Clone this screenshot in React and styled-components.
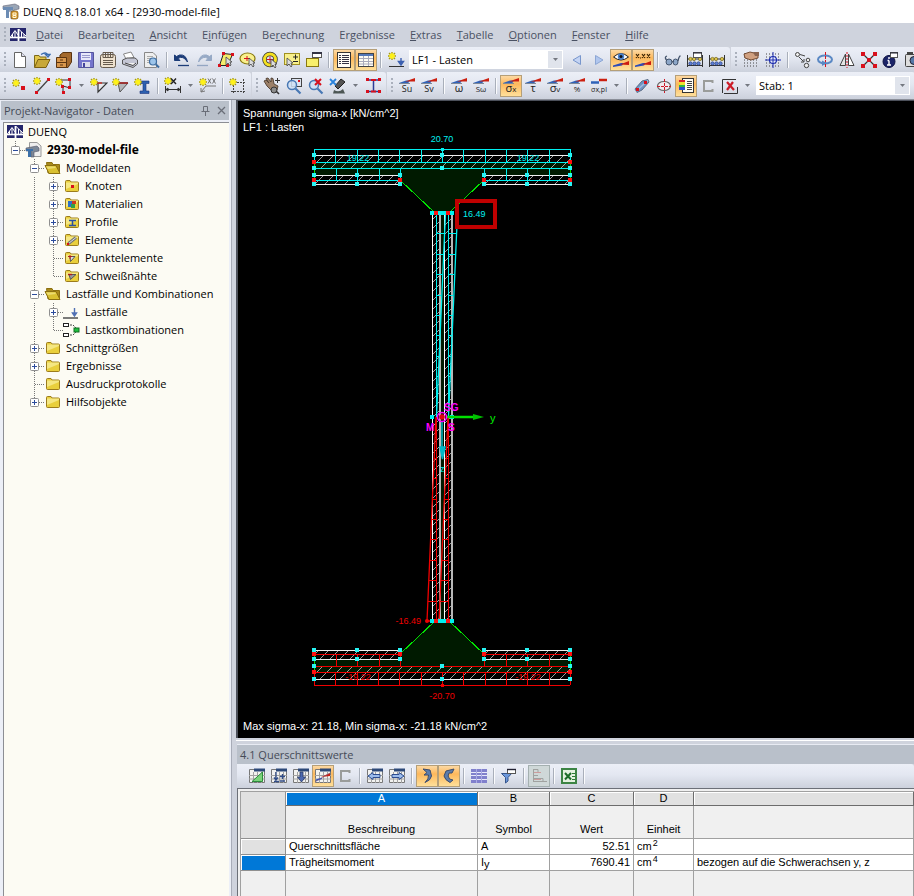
import React from "react";
import styled, { createGlobalStyle, css } from "styled-components";

const UI_FONT = '"Open Sans", "Noto Sans", sans-serif';
const GDI_FONT = '"Liberation Sans", Arial, sans-serif';

const GlobalStyle = createGlobalStyle`
  * { box-sizing: border-box; }
  body { margin: 0; overflow: hidden; background: #cfd3dd; }
  button, select { font: inherit; color: inherit; margin: 0; }
`;

/* ---------- icon fragments ---------- */

const Star = ({ x = 4, y = 5 }) => (
  <g transform={`translate(${x} ${y})`}>
    <path d="M0-4V4M-4 0H4M-3-3L3 3M3-3L-3 3" stroke="#a89a10" strokeWidth="1.4" />
    <path d="M0-3V3M-3 0H3M-2-2L2 2M2-2L-2 2" stroke="#fff21a" strokeWidth="1.4" />
  </g>
);
const Flag = () => (
  <g>
    <path d="M1 7V6L8 3.500H12L10 6.500Z" fill="#2f62b8" />
    <path d="M7 4.500L17 1V4.500Z" fill="#cc2010" />
    <path d="M1 6.500H12" stroke="#7c8898" />
  </g>
);
const Sym = ({ children, x = 9, size = 9 }) => (
  <text x={x} y="15" fontSize={size} textAnchor="middle" fontFamily='"Open Sans", sans-serif' fill="#1c1c1c">
    {children}
  </text>
);
const Dot = ({ x, y, s = 3, c = "#d8101c" }) => <rect x={x} y={y} width={s} height={s} fill={c} />;
const MiniGrid = ({ children }) => (
  <g>
    <path d="M1.500 2.500H16.500V15.500H1.500Z" fill="#f2f2f0" stroke="#777" />
    <path d="M6 1.500H17V4.500H6Z" fill="#2c4878" />
    <path d="M1 8.500H17M1 12H17M5.500 5V16M9.500 5V16M13.500 5V16" stroke="#a2a2a2" />
    {children}
  </g>
);
const Cursor = ({ x = 9, y = 8 }) => (
  <path d={`M${x} ${y}V${y + 8}L${x + 2} ${y + 6}L${x + 4} ${y + 9}L${x + 5} ${y + 8}L${x + 4} ${y + 5}H${x + 6}Z`} fill="#ddd" stroke="#444" strokeWidth="0.8" />
);
const Abacus = () => (
  <g>
    <path d="M1.500 4V16M16.500 4V16M1 8H17M1 14.500H17" stroke="#333" fill="none" />
    <g fill="#d9c34c" stroke="#6b5a10" strokeWidth="0.6"><circle cx="4.500" cy="8" r="1.700" /><circle cx="8" cy="8" r="1.700" /><circle cx="14" cy="8" r="1.700" /></g>
    <g fill="#5f82d8" stroke="#1c2f70" strokeWidth="0.6"><circle cx="4.500" cy="12.500" r="1.700" /><circle cx="8.500" cy="12.500" r="1.700" /><circle cx="12.500" cy="12.500" r="1.700" /></g>
  </g>
);
const FolderBody = () => (
  <g>
    <path d="M2.500 4.500Q2.500 3.500 3.500 3.500H7L8 5H14.500Q15.500 5 15.500 6V13.500Q15.500 14.500 14.500 14.500H3.500Q2.500 14.500 2.500 13.500Z" fill="#e9cf3c" stroke="#9c7c1c" />
    <path d="M3 5.500H15V7L3 12Z" fill="#f8ec94" opacity="0.8" />
  </g>
);
const Dots = () => (
  <path d="M2 3H17M2 6H17M2 9H17M2 12H17M2 15H17" stroke="#444" strokeDasharray="1 2" />
);
const Dim = ({ c = "#333" }) => <path d="M1.500 9V16M16.500 9V16M1 12.500H17M2 12.500L4 11V14ZM16 12.500L14 11V14Z" stroke={c} fill={c} />;

const ICONS = {
  bridge: <g><rect x="1" y="2" width="16" height="13" fill="#25266c" /><path d="M1 11.500H17" stroke="#fff" strokeWidth="1.600" /><path d="M9.500 3V15" stroke="#fff" strokeWidth="1.800" /><path d="M1.500 11L6 4.500L9 9M3.500 8V11M6 5V11M10 3.500L17 10M12.500 6V11M15 8V11" stroke="#fff" fill="none" /></g>,
  app: <g><path d="M1 3L13 1L17 3V6L12 7V15L9 16V8L6 8.500V6L1 6Z" fill="#9aa6b6" stroke="#667" strokeWidth="0.600" /><path d="M1 4H11V7H7V15H4V7H1Z" fill="#6c8cb4" /><rect x="9" y="8" width="7" height="8" rx="2" fill="#d9992c" stroke="#805810" strokeWidth="0.700" /><path d="M11 10H14V12H11ZM11 12.500H14V14.500H11Z" fill="none" stroke="#fff8d8" /></g>,
  new: <g><path d="M3.500 1.500H10.500L14.500 5.500V16.500H3.500Z" fill="#fff" stroke="#666" /><path d="M10.500 1.500V5.500H14.500" fill="#dde" stroke="#666" /></g>,
  open: <g><path d="M1.500 16V4.500H6L7 6H13V9" fill="#e2c64c" stroke="#7c6a1c" /><path d="M1.500 16.500L5 8.500H17L13 16.500Z" fill="#c8a838" stroke="#7c6010" /><path d="M8 3.500Q13 0 15 4M15 6L12.500 3.500H17Z" fill="none" stroke="#3a6cb0" strokeWidth="1.300" /></g>,
  cabinet: <g><path d="M5 4L8 1.500H16.500V11L13 16.500H5Z" fill="#a4692c" stroke="#5a3410" /><path d="M1.500 6.500H11.500V16.500H1.500Z" fill="#d9974c" stroke="#5a3410" /><path d="M1.500 11.500H11.500M5 9H8M5 14H8" stroke="#5a3410" /></g>,
  save: <g><path d="M1.500 1.500H16.500V16.500H1.500Z" fill="#7474cc" stroke="#55559c" /><rect x="4" y="2" width="10" height="7" fill="#e8e8fa" /><path d="M5 4.500H13M5 6.500H13" stroke="#9999cc" /><rect x="5" y="11" width="8" height="5" fill="#dcdcec" /><rect x="6" y="12" width="2" height="4" fill="#44449c" /></g>,
  sheet: <g><rect x="1.500" y="3.500" width="15" height="13" rx="2" fill="#efe2cf" stroke="#665a4c" /><path d="M4 1.500H14V6.500H4ZM6.500 2V6M9 2V6M11.500 2V6M4 9.500H14M4 11.500H14M4 13.500H14" stroke="#665a4c" fill="none" /></g>,
  print: <g><path d="M5 8L2.500 3L10 1L13 6.500Z" fill="#fff" stroke="#888" /><path d="M1.500 9L6 7H14L16.500 9V13L12 16.500L1.500 13Z" fill="#c4c6d4" stroke="#555" /><path d="M4 12L12 14.500L15 12" stroke="#444" fill="#f4f4f4" /></g>,
  preview: <g><path d="M1.500 1.500H10L13.500 5V16.500H1.500Z" fill="#eee" stroke="#888" /><path d="M4 5.500H10M4 7.500H8M4 9.500H7M4 11.500H7" stroke="#aaa" /><circle cx="10" cy="10.500" r="3.500" fill="#9cc4ea" stroke="#3c6ca0" strokeWidth="1.200" /><path d="M13 13.500L16 16.500" stroke="#3c6ca0" strokeWidth="2" /></g>,
  undo: <g><path d="M1.500 4V9.500H7L5 7.500Q10 4 14.500 11Q13 3 6.500 4L3.500 5.500Z" fill="#1c3c78" stroke="#1c3c78" /><path d="M5 14.500H16" stroke="#1c3c78" strokeWidth="1.300" /></g>,
  redo: <g opacity="0.7"><path d="M16.500 4V9.500H11L13 7.500Q8 4 3.500 11Q5 3 11.500 4L14.500 5.500Z" fill="#7790b4" stroke="#7790b4" /><path d="M2 14.500H13" stroke="#7790b4" strokeWidth="1.300" /></g>,
  selPoly: <g><path d="M6.500 2.500L15.500 3.500L10.500 14.500H2.500Z" fill="#f4ec6c" stroke="#222" /><Dot x={5} y={1} /><Dot x={14} y={2} /><Dot x={1} y={13} /><Dot x={9} y={13} /><Cursor x={9} y={6} /></g>,
  selEll: <g><ellipse cx="8.500" cy="7.500" rx="7.500" ry="5.500" fill="#f8f08c" stroke="#887810" strokeWidth="1.200" /><path d="M5 7.500H11M8 5V10" stroke="#d8101c" /><Cursor x={10} y={7} /></g>,
  selRing: <g><circle cx="9" cy="8.500" r="5.500" fill="none" stroke="#333" strokeWidth="4.500" /><circle cx="9" cy="8.500" r="5.500" fill="none" stroke="#f4e020" strokeWidth="3" /><path d="M6 8.500H12M9 5.500V11.500" stroke="#d8101c" /><Cursor x={10} y={8} /></g>,
  selPlus: <g><rect x="1.500" y="2.500" width="15" height="11" fill="#f8f08c" stroke="#a09020" /><path d="M12.500 3.500V8.500M10 6H15M10 10.500H15" stroke="#222" /><Cursor x={4} y={7} /></g>,
  newWin: <g><rect x="1.500" y="7.500" width="12" height="8" fill="#f8f06c" stroke="#887810" /><rect x="7.500" y="1.500" width="9" height="5" fill="#fff" stroke="#555" /><path d="M7 2H17" stroke="#334" strokeWidth="2" /></g>,
  listDoc: <g><rect x="2.500" y="1.500" width="13" height="15" fill="#fffdf4" stroke="#333" /><path d="M4 4.500H6M4 6.500H6M4 8.500H6M4 10.500H6M4 12.500H6M7 4.500H14M7 6.500H14M7 8.500H14M7 10.500H14M7 12.500H14" stroke="#334" /></g>,
  tableDoc: <g><rect x="1.500" y="2.500" width="15" height="13" fill="#fffdf4" stroke="#444" /><rect x="2" y="3" width="14" height="2" fill="#5578b8" /><path d="M2 7.500H16M2 10.500H16M2 13H16M6.500 5V15M11.500 5V15" stroke="#aab" /></g>,
  newLoad: <g><Star x={5} y={5} /><path d="M2 15.500H17" stroke="#333" /><path d="M14 7V12M11.500 10.500L14 14L16.500 10.500Z" stroke="#3c60b0" fill="#3c60b0" strokeWidth="1.400" /></g>,
  prev: <path d="M12.500 4.500V13.500L5 9Z" fill="#c4d4f4" stroke="#7896cc" />,
  next: <path d="M5.500 4.500V13.500L13 9Z" fill="#b0c6ee" stroke="#8ca6d4" />,
  eye: <g><path d="M1.500 6Q9-1 16.500 6Q9 12 1.500 6Z" fill="#fff" stroke="#222" /><circle cx="9" cy="5.500" r="3.200" fill="#4a80cc" /><circle cx="9" cy="5.500" r="1.500" fill="#111" /><path d="M1 16V14.500L9 12H12L10 14.500Z" fill="#2c4cb8" /><path d="M8 13.500L17 10V14Z" fill="#cc1c10" /></g>,
  xxx: <g><path d="M2 3L5 7M5 3L2 7M8 3L11 7M11 3L8 7M13 3L16 7M16 3L13 7M6 7H7" stroke="#3a2404" strokeWidth="1.200" /><path d="M1 16V14.500L9 12H12L10 14.500Z" fill="#2c4cb8" /><path d="M8 13.500L17 10V14Z" fill="#cc1c10" /></g>,
  glasses: <g fill="#8ca6c8" stroke="#44546c"><ellipse cx="5" cy="11" rx="3" ry="3" /><ellipse cx="11.500" cy="11" rx="2.500" ry="3" /><path d="M2.500 9Q0 6 3 5M8 11L10 10M14 10Q15 5 16.500 5" fill="none" strokeWidth="1.300" /></g>,
  abacusWin: <g><Abacus /><rect x="7.500" y="1.500" width="8" height="5" fill="#fff" stroke="#555" /><path d="M7 2H16" stroke="#223" /></g>,
  abacus: <Abacus />,
  handGrid: <g><Dots /><path d="M2 3L8 1L16 3V7L9 9L3 7Z" fill="#d0a080" stroke="#744c34" /><path d="M11 1H17V5H13Z" fill="#8a6450" /></g>,
  snapGrid: <g><Dots /><circle cx="9" cy="9" r="3.500" fill="#e8ecfa" stroke="#1c2cb0" strokeWidth="1.200" /><path d="M9 1V17M1 9H17" stroke="#1c2cb0" /></g>,
  copyNode: <g fill="#eee" stroke="#444"><circle cx="3.500" cy="3.500" r="2" /><circle cx="14" cy="9" r="1.800" /><circle cx="12.500" cy="14.500" r="2.200" /><path d="M6 3.500L11 5M5 6L9.500 10.500M10 8V11H7" fill="none" /></g>,
  rotate: <g><ellipse cx="9" cy="8.500" rx="7" ry="4" fill="none" stroke="#5a88c4" strokeWidth="2" /><path d="M9.500 1V17" stroke="#d8101c" strokeDasharray="3 1" /><path d="M6 9.500L11 12L6 15Z" fill="#5a88c4" /></g>,
  mirror: <g><path d="M7.500 3V14.500H2Z" fill="#e4e4e4" stroke="#444" /><path d="M10.500 3V14.500H16Z" fill="#fff" stroke="#444" /><path d="M9 1V17" stroke="#d8101c" strokeDasharray="2 1" /></g>,
  cross: <g><path d="M3 3L15 15M15 3L3 15" stroke="#333" strokeWidth="1.200" /><Dot x={1} y={1} s={4} /><Dot x={13} y={1} s={4} /><Dot x={1} y={13} s={4} /><Dot x={13} y={13} s={4} /><Dot x={7} y={7} s={4} /></g>,
  info: <g><circle cx="7" cy="10.500" r="6" fill="#1c2468" stroke="#0c1040" /><path d="M7 6V8M7 9.500V14M5 14H9M5.500 9.500H7" stroke="#fff" strokeWidth="1.400" /><rect x="8.500" y="1.500" width="7" height="5" fill="#fff" stroke="#555" /><path d="M8 2H16" stroke="#223" /></g>,
  camera: <g><rect x="1.500" y="3.500" width="15" height="12" rx="1" fill="#ddd" stroke="#444" /><circle cx="10" cy="9.500" r="4" fill="#5578a8" stroke="#223" /><path d="M3 2H9" stroke="#444" strokeWidth="2" /></g>,

  newNode: <g><Star x={5} y={6} /><Dot x={10} y={9} s={4} /></g>,
  newLine: <g><path d="M4 15L15 3" stroke="#444" strokeWidth="1.300" /><Star x={4} y={4} /><Dot x={14} y={1} /><Dot x={2} y={14} /></g>,
  newPoly: <g><path d="M5 3H15V11L8 9V15" fill="none" stroke="#333" /><Star /><Dot x={13} y={1} /><Dot x={13} y={9} /><Dot x={7} y={14} /><Dot x={6} y={8} /></g>,
  newElem: <g><path d="M7 6H17L8 15V6" fill="#e8eaee" stroke="#333" strokeWidth="1.200" /><path d="M7 6H12" stroke="#cc2c20" strokeWidth="1.400" /><Star /></g>,
  newWeld: <g><path d="M6 6H16L8 15Z" fill="#b4b6ba" stroke="#555" /><path d="M6 6H16" stroke="#a02020" strokeWidth="1.600" /><Star /></g>,
  newProfile: <g><path d="M6 4H15V6.500H12V14H15V16.500H6V14H9V6.500H6Z" fill="#2c60b0" stroke="#1c3478" strokeWidth="0.600" /><Star /></g>,
  dimX: <g><Dim /><Star x={4} y={4} /><path d="M7 1.500L12 7M12 1.500L7 7" stroke="#222" strokeWidth="1.400" /></g>,
  dimXX: <g><path d="M2 15L7 9H17M2 15V11M2 15L6 14" stroke="#777" fill="none" /><Star /><path d="M9 1.500L12 6.500M12 1.500L9 6.500M13.500 1.500L16.500 6.500M16.500 1.500L13.500 6.500" stroke="#666" strokeWidth="0.900" /></g>,
  newFrame: <g><path d="M4.500 2V17M14.500 2V17M2 5.500H17M2 14.500H17" stroke="#444" strokeDasharray="2 1" /><Star /></g>,
  hand: <g><path d="M4 9L1 4L3 3L6 6L3 1.500L5 1L8 5L8 1L10 1.500L11 7L15 9L14 13L9 14Z" fill="#9c8068" stroke="#4c3c30" strokeWidth="0.900" /><path d="M12 3.500H17M14.500 1V6" stroke="#333" /><circle cx="11" cy="13" r="3" fill="#8c8c8c" stroke="#333" /><path d="M13 14L16 17" stroke="#333" strokeWidth="1.600" /></g>,
  zoomWin: <g><rect x="6.500" y="1.500" width="10" height="8" fill="#dde4f0" stroke="#444" /><circle cx="7" cy="8" r="4.500" fill="#d0e0f4" fillOpacity="0.850" stroke="#4878b4" strokeWidth="1.500" /><path d="M10.500 11.500L15.500 16.500" stroke="#4878b4" strokeWidth="2.200" /><Dot x={13} y={3} s={2} /></g>,
  zoomX: <g><circle cx="7" cy="8" r="4.500" fill="#d0e0f4" stroke="#4878b4" strokeWidth="1.500" /><path d="M10.500 11.500L15.500 16.500" stroke="#4878b4" strokeWidth="2.200" /><path d="M8 2L14 8M14 2L8 8" stroke="#d8101c" strokeWidth="2" /></g>,
  view: <g><path d="M12 2L16 5L9 12L6 9Z" fill="#555" stroke="#222" /><path d="M5 13Q10 16 14 12L16 16.500H4Z" fill="#4c5654" /><path d="M1 2L7 8M7 2L1 8" stroke="#2c84dc" strokeWidth="1.800" /></g>,
  section: <g><path d="M4 3H15M3 14.500H15M9.500 3V15" stroke="#2c3c98" strokeWidth="1.500" /><path d="M7 3H12M7 14.500H12" stroke="#d8101c" strokeWidth="2" /><Dot x={2} y={1} /><Dot x={14} y={1} /><Dot x={2} y={13} /><Dot x={14} y={13} /></g>,
  su: <g><Flag /><Sym>Su</Sym></g>,
  sv: <g><Flag /><Sym>Sv</Sym></g>,
  om: <g><Flag /><Sym size={11}>ω</Sym></g>,
  som: <g><Flag /><Sym size={8}>Sω</Sym></g>,
  sx: <g><Flag /><Sym size={11}>σ<tspan fontSize="8">x</tspan></Sym></g>,
  tau: <g><Flag /><Sym size={11}>τ</Sym></g>,
  sigv: <g><Flag /><Sym size={11}>σ<tspan fontSize="8">v</tspan></Sym></g>,
  pct: <g><Flag /><Sym size={8}>%</Sym></g>,
  pl: <g><path d="M1 5.500H9" stroke="#2f62b8" strokeWidth="2.500" /><path d="M9 3H17" stroke="#cc2010" strokeWidth="2.500" /><Sym size={7}>σx,pl</Sym></g>,
  bar3d: <g><path d="M2 12L9 4L15 2.500L16 5L9 13L4 15.500Z" fill="#6c94c4" stroke="#5c6c84" /><path d="M3 14L15 3.500" stroke="#a4bce0" strokeWidth="1.600" /><Dot x={3} y={11} /><Dot x={11} y={4} /></g>,
  ellipse: <g><ellipse cx="9" cy="9" rx="6.500" ry="4.500" fill="#f0ecf0" stroke="#666" strokeWidth="1.200" /><path d="M9.500 2V16M2 9.500H16" stroke="#cc1c28" strokeDasharray="3 1" /></g>,
  legend: <g><rect x="5.500" y="1.500" width="11" height="14" fill="#fffdf4" stroke="#333" /><path d="M10 4.500H15M10 6.500H15M10 8.500H15M10 10.500H15M10 12.500H15" stroke="#444" /><path d="M2 3H8V5H2Z" fill="#d8202c" /><path d="M2 5H8V8H2Z" fill="#f0e030" /><path d="M2 8H8V10H2Z" fill="#30b840" /><path d="M2 10H8V13H2Z" fill="#2c50d0" /></g>,
  channel: <path d="M13.500 6V4H5V14H13.500V12" fill="none" stroke="#9a9c9a" strokeWidth="2" />,
  delX: <g><path d="M1.500 16V2.500H15M16.500 10V16.500H3" fill="none" stroke="#333" /><path d="M6 5L13 13M12 5L6 13" stroke="#cc1c28" strokeWidth="2.200" /></g>,

  gTri: <MiniGrid><path d="M4 14.500L14.500 5V14.500Z" fill="#7ad47a" stroke="#2c8c3c" /></MiniGrid>,
  gPlus: <MiniGrid><path d="M6 5V13M4 10.500L6 13L8 10.500M4 14.500H9M10 9.500H15M12.500 7V12M10 14H15" stroke="#304c88" strokeWidth="1.300" fill="none" /></MiniGrid>,
  gDown: <MiniGrid><path d="M8 5H11V10H13.500L9.500 15L5.500 10H8Z" fill="#4c68b0" stroke="#2c3c68" strokeWidth="0.800" /></MiniGrid>,
  gFlag: <MiniGrid><path d="M2 14V12.500L8 10.500V12Z" fill="#2c4cb8" /><path d="M7 10L16 6V9Z" fill="#cc1c10" /><path d="M1 15L16 6" stroke="#806080" strokeWidth="0.600" /></MiniGrid>,
  gLeft: <MiniGrid><path d="M2 9L7 5.500V7.500H14V10.500H7V12.500Z" fill="#9cbcec" stroke="#2c4c90" /></MiniGrid>,
  gRight: <MiniGrid><path d="M16 9L11 5.500V7.500H4V10.500H11V12.500Z" fill="#9cbcec" stroke="#2c4c90" /></MiniGrid>,
  hookL: <path d="M5 2L12 3L13.500 9Q13 13 7 15.500Q11 12 10.500 8L6 8L9 5.500Z" fill="#5c7cac" stroke="#3c4c6c" />,
  hookR: <path d="M14 2L6 4L4 9Q5 13 10 15.500L13 13L9.500 12Q7 9 9 6L12 6Z" fill="#5c7cac" stroke="#3c4c6c" />,
  lines: <g><rect x="1" y="2" width="16" height="14" fill="#8080cc" /><path d="M1 5.500H17M1 8.500H17M1 12.500H17" stroke="#e8e8fa" /><path d="M6.500 2V16M11.500 2V16" stroke="#aaaae4" /></g>,
  filter: <g><path d="M1.500 6.500H11.500L8 10.500V14L5.500 16V10.500Z" fill="#6c98dc" stroke="#34548c" /><rect x="7.500" y="2.500" width="8" height="4" fill="#fff" stroke="#555" /><path d="M7 2.500H16" stroke="#223" strokeWidth="1.400" /></g>,
  chart: <g fill="none"><path d="M3.500 2V15M3 2.500H8V5.500H10M3 8.500H8M3 11.500H13V14.500H17M3 14.500H15" stroke="#a0a2a0" /><path d="M4 5.500H11M4 12.500H11" stroke="#cc9c9c" /></g>,
  excel: <g><rect x="2" y="2" width="14" height="14" fill="#e4f2e0" stroke="#3c8444" strokeWidth="2" /><path d="M5 6L11 12.500M11 6L5 12.500" stroke="#1c6c28" strokeWidth="2" /><path d="M12 6.500H15M12 9.500H15M12 12.500H15" stroke="#2c7c34" /></g>,

  fileT: <g><path d="M4.500 1.500H12L16 5V15.500H4.500Z" fill="#eee" stroke="#999" /><path d="M1 7L12 5L14 7V10L9 11V16H6V10L1 10Z" fill="#7c8898" stroke="#556" strokeWidth="0.600" /><path d="M1 8H8V10H6V16H3V10H1Z" fill="#3c70a8" /></g>,
  folderOpen: <g><path d="M2.500 3.500H8L9 5.500H15.500V14H4Z" fill="#a88a1c" stroke="#8c7010" /><path d="M1 6.500H12L16 14.500H5Z" fill="#d9c030" stroke="#8c7010" /><path d="M2 7.500H11L12 9L4 10Z" fill="#f4e88c" opacity="0.700" /></g>,
  folder: <FolderBody />,
  fNode: <g><FolderBody /><Dot x={8} y={8} s={3} /></g>,
  fMat: <g><FolderBody /><rect x="5" y="6" width="4" height="6" fill="#2c70c8" /><rect x="9" y="6" width="4" height="3" fill="#cc3c20" /><rect x="8" y="9" width="4" height="4" fill="#30a048" /></g>,
  fProf: <g><FolderBody /><path d="M6 7.500H13M6 12.500H13M9.500 7V13" stroke="#2c50a0" strokeWidth="1.500" /></g>,
  fElem: <g><FolderBody /><path d="M5.500 12.500L13 6.500" stroke="#777" strokeWidth="3" /><path d="M5.500 12.500L13 6.500" stroke="#ddd" /><Dot x={4} y={12} s={2} /></g>,
  fPoint: <g><FolderBody /><path d="M7 7.500H12L7.500 12.500Z" fill="#ddd" stroke="#555" /><path d="M5 7.500H9M7 6V10" stroke="#b01c1c" /></g>,
  fWeld: <g><FolderBody /><path d="M6 7.500H13L7.500 12.500Z" fill="#999" stroke="#555" /><path d="M5 7.500H9" stroke="#b01c1c" strokeWidth="1.400" /></g>,
  load: <g><path d="M0 15H15" stroke="#444" strokeWidth="1.400" /><path d="M11.500 5V11M9.500 10L11.500 13L13.500 10Z" stroke="#5070b4" strokeWidth="1.400" fill="#5070b4" /></g>,
  combo: <g><rect x="0.500" y="2.500" width="5" height="3" fill="#fff" stroke="#222" /><rect x="0.500" y="12.500" width="5" height="3" fill="#fff" stroke="#222" /><path d="M7 4H10L13 7M7 14H10L13 11" stroke="#444" fill="none" strokeDasharray="2 1" /><rect x="11" y="7" width="5" height="4" fill="#20c040" stroke="#106c20" /></g>,
};

const Svg = styled.svg`
  display: block;
  width: 18px;
  height: 18px;
  flex: none;
`;
const Icon = ({ name }) => (
  <Svg viewBox="0 0 18 18" aria-hidden="true">{ICONS[name]}</Svg>
);

/* ---------- frame ---------- */

const Window = styled.div`
  display: flex;
  flex-direction: column;
  height: 100vh;
  overflow: hidden;
  background: #cfd3dd;
  font: 11px/18px ${UI_FONT};
  color: #000;
`;
const TitleBar = styled.header`
  display: flex;
  align-items: center;
  gap: 3px;
  height: 23px;
  padding-left: 2px;
  background: #fff;
  white-space: nowrap;
`;
const Title = styled.h1`
  margin: 0;
  font-size: 11px;
  font-weight: 400;
`;
const MenuBar = styled.nav`
  display: flex;
  align-items: center;
  height: 24px;
  padding-left: 4px;
  white-space: nowrap;
`;
const MenuLogo = styled.span`
  margin-right: 1px;
`;
const MenuItem = styled.button`
  padding: 0 7px 0 8px;
  border: 0;
  background: none;
  font-size: 11px;
  color: #4a5163;
  &:hover { background: #e4e8f0; }
`;
const ToolRow = styled.div`
  display: flex;
  gap: 1px;
  height: ${(p) => p.$h || 25}px;
  overflow: hidden;
`;
const ToolGroup = styled.div`
  display: flex;
  flex: ${(p) => (p.$last ? "1 0 auto" : "none")};
  align-items: center;
  padding: 0 2px 0 ${(p) => (p.$noGrip ? 9 : 4)}px;
  border-radius: 0 3px 3px 0;
  background: linear-gradient(#eceff7, #e3e7f1 45%, #ccd1dc);
`;
const Grip = styled.i`
  width: 2px;
  height: 16px;
  margin-right: 3px;
  background: repeating-linear-gradient(#aab0bc 0 2px, transparent 2px 4px);
`;
const ToolButton = styled.button`
  display: flex;
  flex: none;
  align-items: center;
  justify-content: center;
  width: 22px;
  height: 22px;
  padding: 0;
  border: 1px solid transparent;
  background: none;
  &:hover { border-color: #c2a878; }
  ${(p) => p.$active && css`
    border-color: #b59f78;
    background: linear-gradient(#fcd9a4, #fdb85c 40%, #ffe09a);
  `}
  ${(p) => p.$pressed && css`
    border-color: #a4b0b0;
    background: #cfd8d8;
  `}
`;
const Separator = styled.i`
  flex: none;
  width: 2px;
  height: 16px;
  margin: 0 3px;
  border-left: 1px solid #a9afba;
  border-right: 1px solid #fafbfd;
`;
const DropButton = styled.button`
  display: flex;
  flex: none;
  align-items: center;
  justify-content: center;
  width: 13px;
  height: 20px;
  padding: 0;
  border: 0;
  background: none;
`;
const Caret = () => (
  <svg width="7" height="4" viewBox="0 0 7 4" aria-hidden="true"><path d="M1 0H6L3.500 3Z" fill="#747880" /></svg>
);
const Combo = styled.label`
  display: grid;
  flex: none;
  width: 154px;
  height: 19px;
  margin: 0 3px 0 2px;
  background: #fff;
`;
const ComboSelect = styled.select`
  grid-area: 1 / 1;
  padding: 0 18px 0 3px;
  border: 0;
  border-radius: 0;
  background: transparent;
  appearance: none;
  font-size: 11px;
  line-height: 18px;
`;
const ComboArrow = styled.span`
  display: flex;
  grid-area: 1 / 1;
  align-items: center;
  justify-content: center;
  justify-self: end;
  width: 14px;
  margin: 1px;
  background: #e0e4ec;
  pointer-events: none;
`;

const Tools = ({ items }) =>
  items.map((it, i) => {
    if (it === "|") return <Separator key={i} />;
    if (it === "v") return <DropButton key={i} aria-label="Mehr"><Caret /></DropButton>;
    if (typeof it !== "string") return (
      <Combo key={i}>
        <ComboSelect aria-label={it.label} defaultValue={it.value}><option>{it.value}</option></ComboSelect>
        <ComboArrow><Caret /></ComboArrow>
      </Combo>
    );
    const name = it.replace(/[*#]/, "");
    return (
      <ToolButton key={i} aria-label={name} $active={it.endsWith("*")} $pressed={it.endsWith("#")}>
        <Icon name={name} />
      </ToolButton>
    );
  });

const words = (s) => s.split(" ");
const ROW1 = [
  [...words("new open cabinet save sheet print preview | undo redo selPoly selEll selRing selPlus newWin | listDoc* tableDoc* | newLoad"),
    { label: "Lastfall", value: "LF1 - Lasten" }, ...words("prev next eye* xxx* | glasses abacusWin abacus")],
  words("handGrid snapGrid | copyNode rotate mirror cross info camera"),
];
const ROW2 = [
  words("newNode newLine newPoly v newElem newWeld newProfile | dimX v dimXX | newFrame"),
  words("hand zoomWin zoomX view v section"),
  [...words("su sv | om som | sx* tau sigv pct pl v | bar3d ellipse legend* channel delX v"), { label: "Stab", value: "Stab: 1" }],
];
const TABLE_TOOLS = words("gTri gPlus gDown gFlag* channel | gLeft gRight | hookL* hookR* | lines | filter | chart# | excel |");
const MENU = ["_Datei", "Bearbeite_n", "_Ansicht", "E_infügen", "Be_rechnung", "Er_gebnisse", "_Extras", "_Tabelle", "_Optionen", "_Fenster", "_Hilfe"];

/* ---------- navigator ---------- */

const Body = styled.div`
  display: grid;
  grid-template-columns: 232px minmax(0, 1fr);
  column-gap: 4px;
  flex: 1;
  min-height: 0;
  border-top: 1px solid #8a8e98;
`;
const Navigator = styled.aside`
  display: flex;
  flex-direction: column;
  padding: 0 2px 0 1px;
  border-right: 1px solid #a8acb8;
  background: #eceff7;
`;
const PanelHeader = styled.div`
  display: flex;
  align-items: center;
  height: 20px;
  padding: 0 0 0 3px;
  border-top: 1px solid #e8ebf3;
  background: #b9c0ca;
  color: #454b58;
`;
const PanelTitle = styled.h2`
  flex: 1;
  margin: 0;
  font-size: 11px;
  font-weight: 400;
`;
const HeaderButton = styled.button`
  display: flex;
  align-items: center;
  justify-content: center;
  width: 16px;
  height: 16px;
  padding: 0;
  border: 0;
  background: none;
`;
const TreeBox = styled.ul`
  flex: 1;
  margin: 2px 0 0 2px;
  padding: 0 0 0 2px;
  border: 1px solid #8c8e94;
  border-width: 1px 0 0 1px;
  background: #fcfbf3;
  list-style: none;
`;
const TreeRow = styled.li`
  display: flex;
  align-items: center;
  height: 18px;
  white-space: nowrap;
  font-size: ${(p) => (p.$bold ? 12 : 11)}px;
  font-weight: ${(p) => (p.$bold ? 700 : 400)};
`;
const TreeIcon = styled.span`
  display: flex;
  width: 22px;
`;
const GuideCell = styled.span`
  display: flex;
  width: 19px;
  height: 18px;
`;
const Expander = styled.button`
  display: flex;
  padding: 0;
  border: 0;
  background: none;
`;
const Guide = ({ kind }) => {
  const box = kind === "+" || kind === "-" || kind === "p";
  const down = "t|+".includes(kind);
  const art = (
    <svg width="19" height="18" viewBox="0 0 19 18" aria-hidden="true">
      {kind !== " " && (
        <g stroke="#777" strokeDasharray="1 1">
          <path d={`M9.500 0V${down ? 18 : 9}`} />
          {kind !== "|" && <path d="M10 9.500H19" />}
        </g>
      )}
      {box && (
        <g>
          <rect x="5.500" y="5.500" width="8" height="8" rx="1" fill="#fff" stroke="#8f8f8f" />
          <path d={kind === "-" ? "M7 9.500H12" : "M7 9.500H12M9.500 7V12"} stroke="#2c4c9c" />
        </g>
      )}
    </svg>
  );
  return (
    <GuideCell>
      {box ? <Expander aria-label={kind === "-" ? "Zuklappen" : "Aufklappen"}>{art}</Expander> : art}
    </GuideCell>
  );
};
/* guides: "+" / "-" expander, "p" last expander, "t" tee, "l" last leaf, "|" pass-through, " " empty */
const TREE = [
  ["", "bridge", "DUENQ"],
  ["-", "fileT", "2930-model-file", true],
  [" +", "folderOpen", "Modelldaten", false, true],
  [" |+", "fNode", "Knoten"],
  [" |+", "fMat", "Materialien"],
  [" |+", "fProf", "Profile"],
  [" |+", "fElem", "Elemente"],
  [" |t", "fPoint", "Punktelemente"],
  [" |l", "fWeld", "Schweißnähte"],
  [" +", "folderOpen", "Lastfälle und Kombinationen", false, true],
  [" |+", "load", "Lastfälle"],
  [" |l", "combo", "Lastkombinationen"],
  [" +", "folder", "Schnittgrößen"],
  [" +", "folder", "Ergebnisse"],
  [" t", "folder", "Ausdruckprotokolle"],
  [" p", "folder", "Hilfsobjekte"],
].map(([guides, icon, label, bold, open]) => ({ guides: open ? guides.replace("+", "-") : guides, icon, label, bold }));

/* ---------- cross-section drawing, origin at the centroid ---------- */

const C = "#00f0f0";
const R = "#f00000";
const steps = (a, b, n) => Array.from({ length: n + 1 }, (_, i) => Math.round(a + ((b - a) * i) / n));
const vLines = (xs, y1, y2) => xs.map((x) => `M${x} ${y1}V${y2}`).join("");

const Flange = ({ top }) => {
  const s = top ? -1 : 1;
  const c = top ? C : R;
  const y = (v) => v * s;
  const nodes = [[-128, 262], [0, 262], [128, 262], [0, 249], [-128, 249], [128, 249]];
  [-128, -85, -42, 42, 85, 128].forEach((x) => nodes.push([x, 242], [x, 233]));
  return (
    <g>
      <path d={`M-128 ${y(255)}H128V${y(242)}H42V${y(237)}L7 ${y(204)}H-7L-42 ${y(237)}V${y(242)}H-128Z`} fill="#001a00" />
      <rect x="-128" y={top ? -262 : 249} width="256" height="13" fill="url(#hatch)" />
      <rect x="-128" y={top ? -242 : 233} width="86" height="9" fill="url(#hatch)" />
      <rect x="42" y={top ? -242 : 233} width="86" height="9" fill="url(#hatch)" />
      <path d={`M-128 ${y(262)}H128M-128 ${y(249)}H128M-128 ${y(242)}H-42M-128 ${y(233)}H-42M42 ${y(242)}H128M42 ${y(233)}H128`} stroke="#f0f0f0" />
      <path d={`M-128 ${y(268)}V${y(255)}M128 ${y(268)}V${y(255)}M-128 ${y(268)}H128M-128 ${y(255)}H128M-128 ${y(249)}H128M-128 ${y(237)}H-42M42 ${y(237)}H128${vLines(steps(-128, 128, 12), y(255), y(268))}${vLines([...steps(-128, -42, 4), ...steps(42, 128, 4)], y(237), y(249))}`} stroke={c} fill="none" />
      <path d={`M-42 ${y(237)}L-7 ${y(204)}M42 ${y(237)}L7 ${y(204)}M-128 ${y(255)}V${y(237)}M128 ${y(255)}V${y(237)}`} stroke="#00e000" />
      <path d={`M-12 ${y(204)}H12`} stroke={C} strokeWidth="4" />
      {nodes.map(([nx, ny]) => <rect key={`${nx},${ny}`} x={nx - 2} y={y(ny) - 2} width="4" height="4" fill="#28f4f4" />)}
      {[[-128, 255], [128, 255], [-128, 237], [128, 237], [-42, 237], [42, 237], [-6, 204], [6, 204]].map(([rx, ry]) => (
        <rect key={`${rx},${ry}`} x={rx - 2} y={y(ry) - 2} width="4" height="4" fill="#ff1010" />
      ))}
      <rect x="-1" y={y(268) - 1} width="3" height="3" fill={c} />
      <g fill={c}>
        <text x="0" y={top ? -275 : 282} textAnchor="middle">{top ? "20.70" : "-20.70"}</text>
        <text x="-84" y={top ? -256 : 263} textAnchor="middle">{top ? "19.22" : "-19.22"}</text>
        <text x="86" y={top ? -256 : 263} textAnchor="middle">{top ? "19.22" : "-19.22"}</text>
      </g>
    </g>
  );
};
const webTicks = (dir) =>
  [-6, 6].map((x) => Array.from({ length: 9 }, (_, i) => {
    const k = 1 - (i + 1) / 10;
    return `M${x} ${Math.round(dir * 204 * k)}h${Math.round(-dir * 9 * k)}`;
  }).join("")).join("");

const CrossSection = () => (
  <Drawing viewBox="-204 -316 480 637" role="img" aria-label="Spannungsverlauf im Querschnitt">
    <defs>
      <pattern id="hatch" width="10" height="10" patternUnits="userSpaceOnUse">
        <path d="M0 10L10 0" stroke="#a0a0a0" />
      </pattern>
      <pattern id="hatchWeb" width="9" height="9" patternUnits="userSpaceOnUse">
        <path d="M0 9L9 0" stroke="#a0a0a0" />
      </pattern>
    </defs>
    <rect x="-2" y="-204" width="5" height="408" fill="#001a00" />
    <rect x="-9" y="-204" width="7" height="408" fill="url(#hatchWeb)" />
    <rect x="3" y="-204" width="7" height="408" fill="url(#hatchWeb)" />
    <g shapeRendering="crispEdges">
      <path d="M-9.500-204V204M2.500-204V204" stroke="#fff" />
      <path d="M-2-204V204M10-204V204" stroke="#b8b8b8" strokeWidth="2" />
      <path d={`M-5.500-204V0M6.500-204V0${webTicks(-1)}`} stroke={C} />
      <path d={`M-5.500 0V204M6.500 0V204${webTicks(1)}`} stroke={R} />
    </g>
    <path d="M15.500-204L6.500 0M3.500-204L-5.500 0" stroke={C} strokeWidth="1.300" />
    <path d="M-15 204L-6 0M-3 204L6 0M-15 204H-6" stroke={R} strokeWidth="1.300" />
    <g shapeRendering="crispEdges"><Flange top /></g>
    <g shapeRendering="crispEdges"><Flange /></g>
    <circle cx="-15" cy="204" r="2" fill={R} />
    <text x="-21" y="207" textAnchor="end" fill={R}>-16.49</text>
    <rect x="-12" y="-2" width="4" height="4" fill={C} />
    <rect x="8" y="-2" width="4" height="4" fill={C} />
    <path d="M0 4V32M-2 30H3L0.500 42Z" stroke="#00b8c8" fill="#00b8c8" strokeWidth="1.500" />
    <text x="-2" y="55" fill={C}>z</text>
    <path d="M4 0H34" stroke="#00e000" strokeWidth="2.500" />
    <path d="M31-3L42 0L31 3Z" fill="#00c000" />
    <text x="48" y="5" fill="#00f000" fontSize="11">y</text>
    <circle r="4.500" fill="none" stroke="#ff00ff" strokeWidth="1.600" />
    <circle r="2.800" fill="#e00010" />
    <g fill="#ff00ff" fontWeight="700" fontSize="10">
      <text x="2" y="-6">SG</text>
      <text x="-16" y="14">M</text>
      <text x="6" y="14">S</text>
    </g>
    <text x="21" y="-200" fill={C}>16.49</text>
    <rect x="15" y="-216" width="38" height="26" fill="none" stroke="#c00000" strokeWidth="4" />
  </Drawing>
);

const Drawing = styled.svg`
  grid-area: 1 / 1;
  width: 480px;
  height: 637px;
  font: 9px ${GDI_FONT};
`;
const Main = styled.main`
  display: flex;
  flex-direction: column;
  min-width: 0;
  min-height: 0;
`;
const Canvas = styled.section`
  display: grid;
  grid-template-columns: minmax(0, 1fr);
  grid-template-rows: minmax(0, 1fr);
  flex: 1;
  min-height: 0;
  overflow: hidden;
  border: solid #4c505a;
  border-width: 1px 0 0 2px;
  background: #000;
`;
const CanvasNotes = styled.div`
  display: flex;
  grid-area: 1 / 1;
  flex-direction: column;
  padding: 5px;
  font: 11px/14px ${GDI_FONT};
  color: #fff;
  pointer-events: none;
`;
const NoteBottom = styled.span`
  margin-top: auto;
`;

/* ---------- results table ---------- */

const TablePanel = styled.section`
  flex: none;
  margin-top: 2px;
  padding-left: 1px;
  border-top: 1px solid #fff;
`;
const PanelGap = styled.div`
  height: 3px;
`;
const Sheet = styled.div`
  padding: 2px 0 0 2px;
  border: solid #6c7078;
  border-width: 1px 0 0 1px;
  background: #f0f0f0;
  overflow: hidden;
`;
const Table = styled.table`
  width: 100%;
  table-layout: fixed;
  border: solid #a0a0a0;
  border-width: 1px 0 0 1px;
  border-collapse: separate;
  border-spacing: 0;
  font: 11px/13px ${GDI_FONT};
  color: #000;
`;
const Col = styled.col`
  width: ${(p) => (p.$w ? `${p.$w}px` : "auto")};
`;
const LetterCell = styled.th`
  height: 14px;
  padding: 0;
  border: solid #6c6c6c;
  border-width: 0 1px 1px 0;
  background: ${(p) => (p.$on ? "#0078d7" : "#e1e1e1")};
  box-shadow: inset 1px 1px #fff;
  font-weight: 400;
  color: ${(p) => (p.$on ? "#fff" : "#000")};
`;
const CornerCell = styled.th`
  border: solid #909090;
  border-width: 0 1px 1px 0;
  background: #e1e1e1;
`;
const NameCell = styled.th`
  height: 33px;
  padding: 0 0 2px;
  border: solid #a0a0a0;
  border-width: 0 1px 1px 0;
  vertical-align: bottom;
  font-weight: 400;
`;
const RowHead = styled.th`
  padding: 0;
  border: solid #909090;
  border-width: 0 1px 1px 0;
  background: ${(p) => (p.$on ? "#0078d7" : "#e1e1e1")};
  box-shadow: inset 1px 1px #fff;
`;
const Cell = styled.td`
  height: 16px;
  padding: 0 3px;
  border: solid #a0a0a0;
  border-width: 0 1px 1px 0;
  background: #fff;
  text-align: ${(p) => (p.$right ? "right" : "left")};
  white-space: nowrap;
`;
const FillCell = styled.td`
  height: 25px;
  border-right: 1px solid #a0a0a0;
`;
const Raised = styled.sup`
  padding-left: 1px;
  font-size: 9px;
  line-height: 0;
  vertical-align: 4px;
`;
const Lowered = styled.sub`
  font-size: 11px;
  line-height: 0;
  vertical-align: -2px;
`;

export default function App() {
  return (
    <Window>
      <GlobalStyle />
      <TitleBar>
        <Icon name="app" />
        <Title>DUENQ 8.18.01 x64 - [2930-model-file]</Title>
      </TitleBar>
      <MenuBar>
        <Grip />
        <MenuLogo><Icon name="bridge" /></MenuLogo>
        {MENU.map((m) => {
          const i = m.indexOf("_");
          return <MenuItem key={m}>{m.slice(0, i)}<u>{m[i + 1]}</u>{m.slice(i + 2)}</MenuItem>;
        })}
      </MenuBar>
      <ToolRow>
        {ROW1.map((g, i) => <ToolGroup key={i} $last={i === 1}><Grip /><Tools items={g} /></ToolGroup>)}
      </ToolRow>
      <ToolRow $h={27}>
        {ROW2.map((g, i) => <ToolGroup key={i} $last={i === 2}><Grip /><Tools items={g} /></ToolGroup>)}
      </ToolRow>
      <Body>
        <Navigator>
          <PanelHeader>
            <PanelTitle>Projekt-Navigator - Daten</PanelTitle>
            <HeaderButton aria-label="Anheften">
              <svg width="9" height="10" viewBox="0 0 9 10"><path d="M2.500 0.500H6.500V5.500H2.500ZM0.500 5.500H8.500M4.500 6V10" fill="none" stroke="#6a6e78" /></svg>
            </HeaderButton>
            <HeaderButton aria-label="Schließen">
              <svg width="9" height="9" viewBox="0 0 9 9"><path d="M1 1L8 8M8 1L1 8" stroke="#6a6e78" strokeWidth="1.300" /></svg>
            </HeaderButton>
          </PanelHeader>
          <TreeBox>
            {TREE.map((row) => (
              <TreeRow key={row.label} $bold={row.bold}>
                {[...row.guides].map((k, i) => <Guide key={i} kind={k} />)}
                <TreeIcon><Icon name={row.icon} /></TreeIcon>
                {row.label}
              </TreeRow>
            ))}
          </TreeBox>
        </Navigator>
        <Main>
          <Canvas>
            <CrossSection />
            <CanvasNotes>
              <span>Spannungen sigma-x [kN/cm^2]</span>
              <span>LF1 : Lasten</span>
              <NoteBottom>Max sigma-x: 21.18, Min sigma-x: -21.18 kN/cm^2</NoteBottom>
            </CanvasNotes>
          </Canvas>
          <TablePanel>
            <PanelGap />
            <PanelHeader><PanelTitle>4.1 Querschnittswerte</PanelTitle></PanelHeader>
            <ToolRow $h={24}>
              <ToolGroup $last $noGrip><Tools items={TABLE_TOOLS} /></ToolGroup>
            </ToolRow>
            <Sheet>
              <Table>
                <colgroup>
                  <Col $w={45} /><Col $w={192} /><Col $w={72} /><Col $w={84} /><Col $w={60} /><Col />
                </colgroup>
                <thead>
                  <tr>
                    <CornerCell rowSpan={2} />
                    <LetterCell $on>A</LetterCell>
                    <LetterCell>B</LetterCell>
                    <LetterCell>C</LetterCell>
                    <LetterCell>D</LetterCell>
                    <LetterCell />
                  </tr>
                  <tr>
                    <NameCell>Beschreibung</NameCell>
                    <NameCell>Symbol</NameCell>
                    <NameCell>Wert</NameCell>
                    <NameCell>Einheit</NameCell>
                    <NameCell />
                  </tr>
                </thead>
                <tbody>
                  <tr>
                    <RowHead />
                    <Cell>Querschnittsfläche</Cell>
                    <Cell>A</Cell>
                    <Cell $right>52.51</Cell>
                    <Cell>cm<Raised>2</Raised></Cell>
                    <Cell />
                  </tr>
                  <tr>
                    <RowHead $on />
                    <Cell>Trägheitsmoment</Cell>
                    <Cell>I<Lowered>y</Lowered></Cell>
                    <Cell $right>7690.41</Cell>
                    <Cell>cm<Raised>4</Raised></Cell>
                    <Cell>bezogen auf die Schwerachsen y, z</Cell>
                  </tr>
                  <tr>
                    {[0, 1, 2, 3, 4, 5].map((k) => <FillCell key={k} />)}
                  </tr>
                </tbody>
              </Table>
            </Sheet>
          </TablePanel>
        </Main>
      </Body>
    </Window>
  );
}
